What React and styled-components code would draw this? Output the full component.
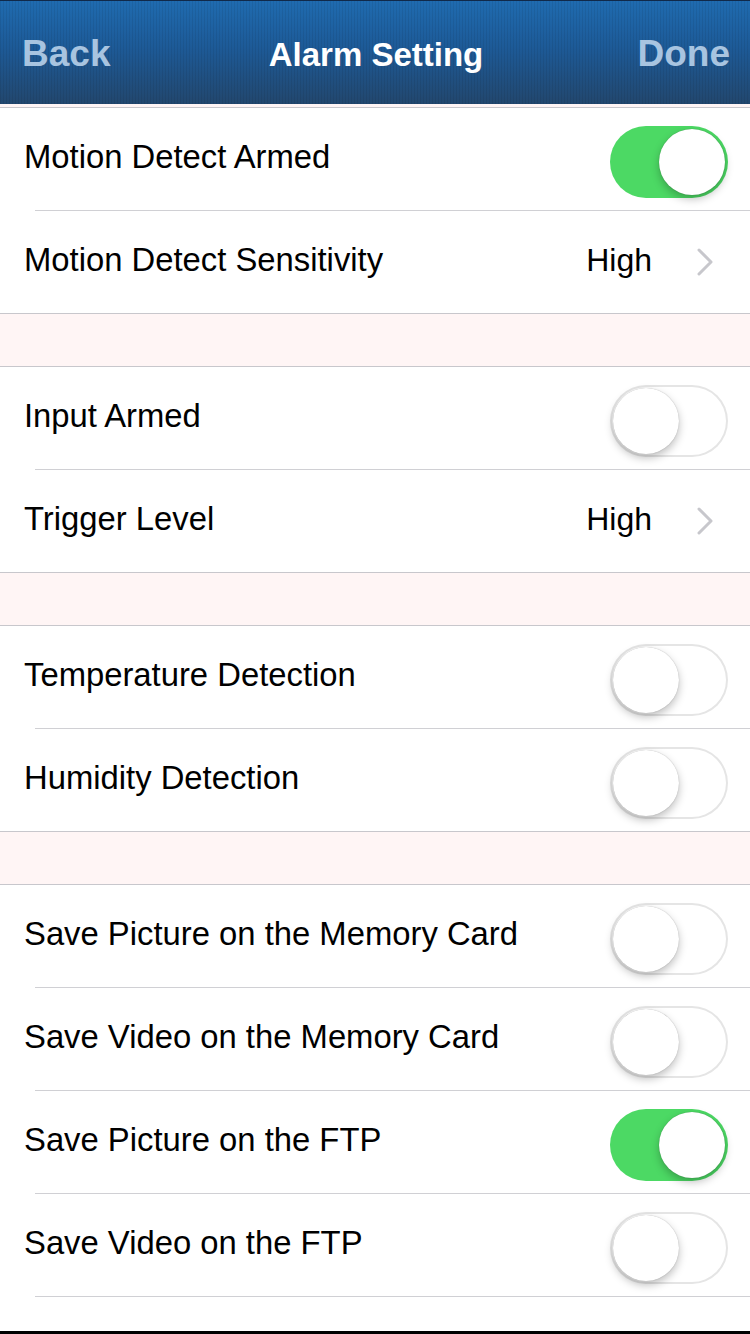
import React from "react";
import styled, { createGlobalStyle } from "styled-components";

const Global = createGlobalStyle`
  html, body { margin: 0; padding: 0; background: #fff5f5; }
  body { font-family: "Liberation Sans", Arial, sans-serif; -webkit-font-smoothing: antialiased; }
`;

const Frame = styled.div`
  width: 750px;
  height: 1334px;
  display: flex;
  flex-direction: column;
  overflow: hidden;
  background: #fff5f5;
`;

const NavBar = styled.header`
  flex: 0 0 auto;
  border-top: 1px solid #10294a;
  box-sizing: border-box;
  height: 104px;
  display: grid;
  grid-template-columns: 1fr auto 1fr;
  align-items: center;
  padding: 0 20px 0 22px;
  background:
    repeating-linear-gradient(90deg, rgba(0, 0, 0, 0.07) 0 1px, transparent 1px 3px),
    linear-gradient(180deg, #1f6bb0 0%, #1d5a97 45%, #22476e 100%);
`;

const NavButton = styled.span`
  font-size: 37px;
  font-weight: bold;
  color: #a8c4e0;
  justify-self: ${(p) => (p.$right ? "end" : "start")};
  margin-top: 2px;
`;

const NavTitle = styled.h1`
  margin: 4px 0 0;
  font-size: 33px;
  font-weight: bold;
  color: #ffffff;
`;

const Content = styled.main`
  flex: 1 1 auto;
  overflow: hidden;
  padding-top: 3px;
  display: flex;
  flex-direction: column;
  gap: 52px;
`;

const Group = styled.section`
  background: #ffffff;
  border-top: 1px solid #c8c7cc;
  border-bottom: 1px solid #c8c7cc;
  display: flex;
  flex-direction: column;
`;

const Row = styled.div`
  height: 102px;
  flex: 0 0 102px;
  display: flex;
  align-items: center;
  padding: 0 22px 0 24px;
`;

const Label = styled.span`
  flex: 1;
  font-size: 32.8px;
  color: #000000;
  margin-bottom: 4px;
`;

const Value = styled.span`
  font-size: 32px;
  color: #000000;
  margin-right: 44px;
  margin-bottom: 4px;
`;

const Chevron = styled.svg`
  width: 18px;
  height: 30px;
  margin-right: 14px;
`;

const Separator = styled.div`
  height: 1px;
  margin-left: 35px;
  background: #d0d0d4;
`;

const Track = styled.div`
  width: 118px;
  height: 72px;
  box-sizing: border-box;
  border-radius: 36px;
  margin-top: 6px;
  padding: 3px;
  display: flex;
  align-items: center;
  justify-content: ${(p) => (p.$on ? "flex-end" : "flex-start")};
  background: ${(p) => (p.$on ? "#4cd964" : "#ffffff")};
  box-shadow: ${(p) => (p.$on ? "none" : "inset 0 0 0 2px #e5e5e5")};
`;

const Knob = styled.div`
  width: 66px;
  height: 66px;
  border-radius: 50%;
  background: #ffffff;
  box-shadow: 0 4px 8px rgba(0, 0, 0, 0.25), 0 0 1px rgba(0, 0, 0, 0.3);
`;

const Toggle = ({ on }) => (
  <Track $on={on}>
    <Knob />
  </Track>
);

const Disclosure = ({ value }) => (
  <>
    <Value>{value}</Value>
    <Chevron viewBox="0 0 18 30">
      <polyline points="3,3 15,15 3,27" fill="none" stroke="#c7c7cc" strokeWidth="3" strokeLinecap="round" strokeLinejoin="round" />
    </Chevron>
  </>
);

const Edge = styled.div`
  flex: 0 0 3px;
  background: #000000;
`;

const groups = [
  [
    { label: "Motion Detect Armed", toggle: true, on: true },
    { label: "Motion Detect Sensitivity", value: "High" },
  ],
  [
    { label: "Input Armed", toggle: true, on: false },
    { label: "Trigger Level", value: "High" },
  ],
  [
    { label: "Temperature Detection", toggle: true, on: false },
    { label: "Humidity Detection", toggle: true, on: false },
  ],
  [
    { label: "Save Picture on the Memory Card", toggle: true, on: false },
    { label: "Save Video on the Memory Card", toggle: true, on: false },
    { label: "Save Picture on the FTP", toggle: true, on: true },
    { label: "Save Video on the FTP", toggle: true, on: false },
    { label: "Preset Linkage", value: "No" },
  ],
];

export default function App() {
  return (
    <Frame>
      <Global />
      <NavBar>
        <NavButton>Back</NavButton>
        <NavTitle>Alarm Setting</NavTitle>
        <NavButton $right>Done</NavButton>
      </NavBar>
      <Content>
        {groups.map((rows, gi) => (
          <Group key={gi}>
            {rows.map((r, i) => (
              <React.Fragment key={r.label}>
                {i > 0 && <Separator />}
                <Row>
                  <Label>{r.label}</Label>
                  {r.toggle ? <Toggle on={r.on} /> : <Disclosure value={r.value} />}
                </Row>
              </React.Fragment>
            ))}
          </Group>
        ))}
      </Content>
      <Edge />
    </Frame>
  );
}
